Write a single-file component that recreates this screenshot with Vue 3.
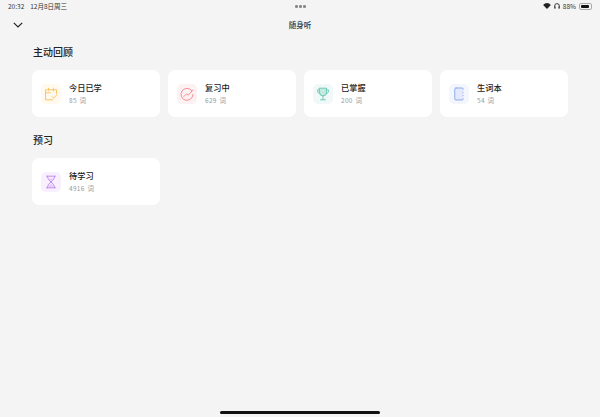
<script setup>
const review = [
  { name: '今日已学', count: '85 词', tone: 'amber', icon: 'calendar' },
  { name: '复习中', count: '629 词', tone: 'red', icon: 'gauge' },
  { name: '已掌握', count: '200 词', tone: 'green', icon: 'trophy' },
  { name: '生词本', count: '54 词', tone: 'blue', icon: 'book' }
]
const preview = [{ name: '待学习', count: '4916 词', tone: 'purple', icon: 'hourglass' }]
const sections = [
  { title: '主动回顾', items: review },
  { title: '预习', items: preview }
]
</script>

<template>
  <div class="page">
    <div class="status">
      <div class="status-left"><span>20:32</span><span>12月8日周三</span></div>
      <div class="dots"><i></i><i></i><i></i></div>
      <div class="status-right">
        <svg width="8" height="6" viewBox="0 0 9 7"><path d="M4.500 7 0 2.400C2.600-.8 6.400-.8 9 2.400z" fill="#222"/></svg>
        <svg width="6" height="6" viewBox="0 0 7 7" fill="none" stroke="#222"><path d="M.8 5V3.400a2.700 2.700 0 0 1 5.400 0V5"/><rect x=".4" y="4" width="1.400" height="2.600" rx=".5" fill="#222" stroke="none"/><rect x="5.200" y="4" width="1.400" height="2.600" rx=".5" fill="#222" stroke="none"/></svg>
        <span>88%</span>
        <span class="battery"><b></b></span>
      </div>
    </div>
    <header class="nav">
      <svg class="chevron" width="10" height="6" viewBox="0 0 10 6" fill="none" stroke="#222" stroke-width="1.200"><path d="M.8.8 5 5 9.200.8"/></svg>
      <span class="nav-title">随身听</span>
    </header>
    <main class="content">
      <section v-for="s in sections" :key="s.title" class="section">
        <h2>{{ s.title }}</h2>
        <div class="grid">
          <div v-for="c in s.items" :key="c.name" class="card">
            <div class="tile" :class="c.tone">
              <svg width="14" height="14" viewBox="0 0 14 14" fill="none" stroke="currentColor" stroke-width="1" stroke-linecap="round" stroke-linejoin="round">
                <template v-if="c.icon === 'calendar'">
                  <path d="M12.500 6.500V2.800H1.500v10h7.500M4.500 1.200v2.600M9.500 1.200v2.600M1.500 5.800h5"/>
                  <path d="m8 9.500 1.600 1.600L13 7.800"/>
                </template>
                <template v-else-if="c.icon === 'gauge'">
                  <path d="M11.700 3.600A6 6 0 1 0 13 7.500"/>
                  <path d="M3.800 9.600 6.600 6.800l1.600 1.500L13 3"/>
                </template>
                <template v-else-if="c.icon === 'trophy'">
                  <path d="M3.500 1.200h7v4.300a3.500 3.500 0 0 1-7 0z" fill="currentColor" fill-opacity=".35"/>
                  <path d="M3.500 3H1.500v1.300a2 2 0 0 0 2 2M10.500 3h2v1.300a2 2 0 0 1-2 2M7 9v3.500M4.500 12.800h5"/>
                </template>
                <template v-else-if="c.icon === 'book'">
                  <rect x="2.800" y="1" width="8.400" height="12" rx="1.200" fill="currentColor" fill-opacity=".15"/>
                  <path d="M11.200 3.200v1.200M11.200 6.400v1.200M11.200 9.600v1.200" stroke-width="1.500" stroke="#f4f6fe"/>
                </template>
                <template v-else>
                  <path d="M2.500 1.200h9M2.500 12.800h9M3.500 1.200c0 3.400 2.200 4.400 3.500 5.800C5.700 8.400 3.500 9.400 3.500 12.800M10.500 1.200C10.500 4.600 8.300 5.600 7 7c1.300 1.400 3.500 2.400 3.500 5.800"/>
                  <path d="M4.200 12c.8-1.700 1.900-2.600 2.800-3.300.9.700 2 1.600 2.800 3.300zM4.600 3.400h4.800C9 4.700 8 5.300 7 6.100 6 5.300 5 4.700 4.600 3.400z" fill="currentColor" fill-opacity=".35" stroke="none"/>
                </template>
              </svg>
            </div>
            <div class="text">
              <div class="name">{{ c.name }}</div>
              <div class="count">{{ c.count }}</div>
            </div>
          </div>
        </div>
      </section>
    </main>
    <div class="home"></div>
  </div>
</template>

<style scoped>
.page {
  position: relative;
  width: 600px;
  height: 417px;
  overflow: hidden;
  background: #f4f4f4;
  color: #222;
  font-family: "Noto Sans CJK SC", "Noto Sans", sans-serif;
}
.status {
  position: relative;
  display: flex;
  justify-content: space-between;
  align-items: center;
  height: 12px;
  padding: 0 8px;
  font-size: 6.500px;
  color: #333;
}
.status-left { display: flex; gap: 6px; }
.status-right { display: flex; align-items: center; gap: 3px; }
.dots {
  position: absolute;
  left: 295px;
  top: 5px;
  display: flex;
  gap: 1.500px;
}
.dots i { width: 2.500px; height: 2.500px; border-radius: 50%; background: #888; }
.battery {
  display: block;
  width: 13px;
  height: 7px;
  padding: 1px;
  border: 0.500px solid #aaa;
  border-radius: 2px;
  box-sizing: border-box;
}
.battery b { display: block; width: 88%; height: 100%; background: #111; border-radius: 1px; }
.nav {
  position: relative;
  display: flex;
  align-items: center;
  justify-content: center;
  height: 24px;
}
.chevron { position: absolute; left: 13px; top: 10px; }
.nav-title { font-size: 7.500px; color: #333; font-weight: 500; }
.content { padding: 8px 32px 0; }
.section { margin-bottom: 15px; }
h2 {
  margin: 0 0 10px 1px;
  font-size: 10px;
  line-height: 16px;
  font-weight: 500;
  color: #222;
}
.grid {
  display: grid;
  grid-template-columns: repeat(4, 128px);
  gap: 8px;
}
.card {
  display: flex;
  align-items: center;
  gap: 8px;
  height: 47px;
  padding: 0 9px;
  box-sizing: border-box;
  background: #fff;
  border-radius: 7px;
}
.tile {
  display: flex;
  align-items: center;
  justify-content: center;
  width: 20px;
  height: 20px;
  border-radius: 5px;
}
.amber { background: #fff9ee; color: #f8c76c; }
.red { background: #fdf2f3; color: #f58d94; }
.green { background: #f1f9f8; color: #6ccab5; }
.blue { background: #f4f6fe; color: #8fa8f0; }
.purple { background: #f8f0fe; color: #c48cf2; }
.text { margin-top: -1px; }
.name { font-size: 8.200px; line-height: 12px; color: #222; font-weight: 500; }
.count { font-size: 6.500px; line-height: 10px; margin-top: 2px; color: #999; letter-spacing: .3px; word-spacing: 1px; }
.home {
  position: absolute;
  left: 220px;
  bottom: 3px;
  width: 160px;
  height: 3px;
  border-radius: 2px;
  background: #111;
}
</style>
